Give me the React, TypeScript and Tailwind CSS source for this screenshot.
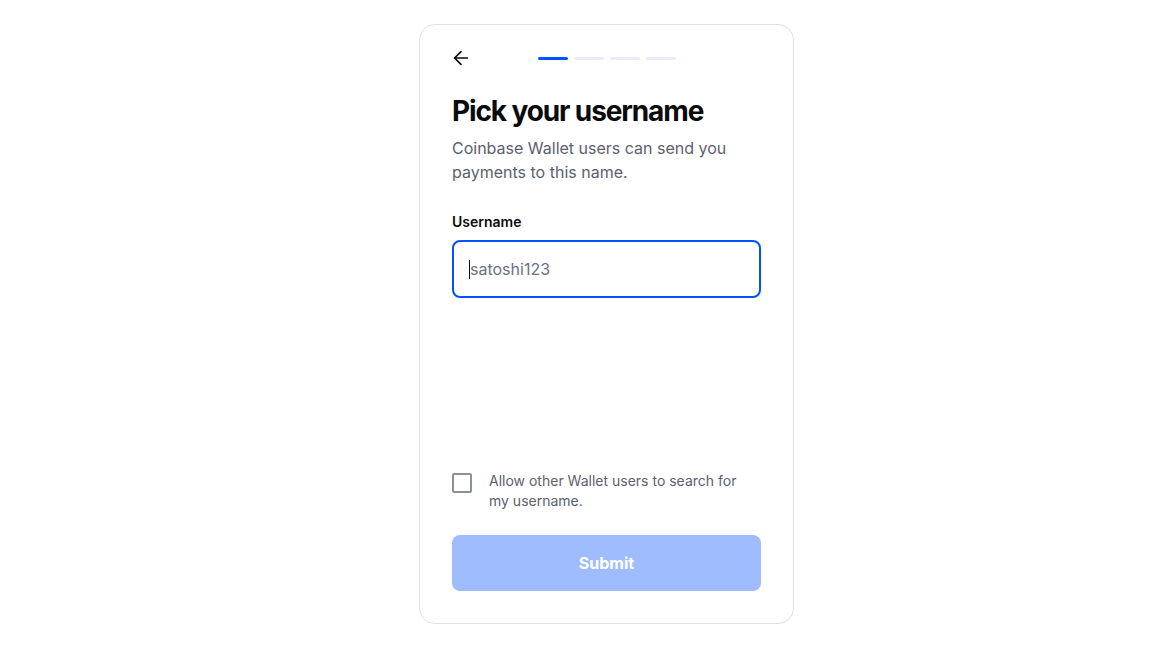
import { ArrowLeft } from 'lucide-react'

const FONT = { fontFamily: 'Inter, "Noto Sans", sans-serif' }

function Progress() {
  return (
    <div className="flex gap-1.5">
      <div className="h-[3px] w-[30px] rounded-full bg-[#0052ff]" />
      <div className="h-[3px] w-[30px] rounded-full bg-[#e8ecfb]" />
      <div className="h-[3px] w-[30px] rounded-full bg-[#e8ecfb]" />
      <div className="h-[3px] w-[30px] rounded-full bg-[#e8ecfb]" />
    </div>
  )
}

export default function App() {
  return (
    <div className="min-h-[651px] w-full bg-white pt-6 pl-[419px]" style={FONT}>
      <div className="flex h-[600px] w-[375px] flex-col rounded-2xl border border-[#dfe1e4] bg-white px-8 pt-[23px] pb-8">
        {/* Header */}
        <div className="relative flex h-5 items-center justify-center">
          <ArrowLeft className="absolute -left-0.5 size-[22px] text-[#0a0b0d]" strokeWidth={1.8} />
          <Progress />
        </div>

        <h1 className="mt-[25px] text-[28px] leading-9 font-bold tracking-[-0.04em] text-[#0a0b0d]">
          Pick your username
        </h1>
        <p className="mt-[7px] text-base leading-6 text-[#5b616e]">
          Coinbase Wallet users can send you payments to this name.
        </p>

        <label className="mt-7 text-sm leading-5 font-semibold text-[#0a0b0d]">Username</label>
        <div className="mt-2 flex h-[58px] items-center rounded-lg border-2 border-[#0052ff] px-[15px]">
          <span className="h-[19px] w-px bg-[#0a0b0d]" />
          <span className="text-base text-[#6b717d]">satoshi123</span>
        </div>

        <div className="flex-1" />

        <div className="flex gap-[17px]">
          <div className="mt-0.5 size-5 shrink-0 rounded-[2px] border-2 border-[#8a919e]" />
          <p className="max-w-[255px] text-sm leading-5 text-[#5b616e]">
            Allow other Wallet users to search for my username.
          </p>
        </div>

        <button className="mt-6 flex h-14 w-full items-center justify-center rounded-lg bg-[#9fbdfe] text-base font-bold text-white">
          Submit
        </button>
      </div>
    </div>
  )
}
